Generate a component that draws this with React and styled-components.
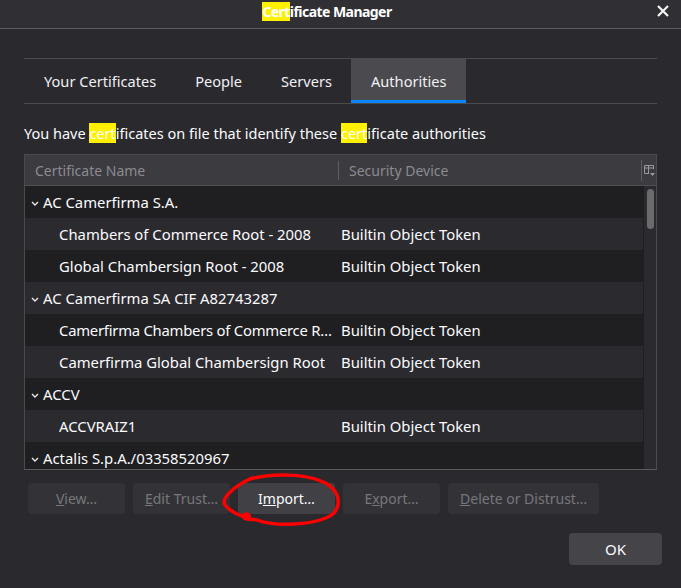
import React from "react";
import styled, { createGlobalStyle } from "styled-components";

const GlobalStyle = createGlobalStyle`
  html, body {
    margin: 0;
    padding: 0;
    background: #2a2a2e;
  }
  body {
    font-family: "Noto Sans", "Open Sans", sans-serif;
    color: #fbfbfe;
  }
`;

const rows = [
  { name: "AC Camerfirma S.A.", group: true },
  { name: "Chambers of Commerce Root - 2008", device: "Builtin Object Token" },
  { name: "Global Chambersign Root - 2008", device: "Builtin Object Token" },
  { name: "AC Camerfirma SA CIF A82743287", group: true },
  { name: "Camerfirma Chambers of Commerce R…", device: "Builtin Object Token", tight: true },
  { name: "Camerfirma Global Chambersign Root", device: "Builtin Object Token" },
  { name: "ACCV", group: true },
  { name: "ACCVRAIZ1", device: "Builtin Object Token" },
  { name: "Actalis S.p.A./03358520967", group: true },
];

const tabs = ["Your Certificates", "People", "Servers", "Authorities"];

export default function App() {
  return (
    <>
      <GlobalStyle />
      <Window>
        <TitleBar>
          <Title>
            <Mark>Cert</Mark>ificate Manager
          </Title>
          <Close aria-label="Close">
            <svg width="12" height="12" viewBox="0 0 12 12">
              <path d="M1 1 L11 11 M11 1 L1 11" stroke="#f4f4f4" strokeWidth="2.2" />
            </svg>
          </Close>
        </TitleBar>

        <Body>
          <Tabs>
            {tabs.map((t) => (
              <Tab key={t} $active={t === "Authorities"}>
                {t}
              </Tab>
            ))}
          </Tabs>

          <Description>
            You have <Mark>cert</Mark>ificates on file that identify these{" "}
            <Mark>cert</Mark>ificate authorities
          </Description>

          <Tree>
            <Header>
              <HeadCell $first>Certificate Name</HeadCell>
              <HeadCell>Security Device</HeadCell>
              <Picker>
                <svg width="11" height="12" viewBox="0 0 11 12">
                  <path
                    d="M0.5 0.5 H9.5 V4 M0.5 0.5 V8.5 H5 M0.5 3 H9.5 M4.5 0.5 V8.5"
                    stroke="#9a9a9e"
                    strokeWidth="1"
                    fill="none"
                  />
                  <path d="M6 8 H11 L8.5 11 Z" fill="#9a9a9e" />
                </svg>
              </Picker>
            </Header>
            <TreeBody>
              <Rows>
                {rows.map((r, i) => (
                  <Row key={r.name} $odd={i % 2 === 1}>
                    <NameCell $group={r.group}>
                      {r.group && (
                        <Twisty width="8" height="5" viewBox="0 0 8 5">
                          <path d="M1 1 L4 4 L7 1" stroke="#e8e8ea" strokeWidth="1.4" fill="none" />
                        </Twisty>
                      )}
                      <NameText $tight={r.tight}>{r.name}</NameText>
                    </NameCell>
                    <DeviceCell>{r.device}</DeviceCell>
                  </Row>
                ))}
              </Rows>
              <Scrollbar>
                <Thumb />
              </Scrollbar>
            </TreeBody>
          </Tree>

          <Buttons>
            <Button disabled $w={97}>
              <u>V</u>iew…
            </Button>
            <Button disabled $w={97}>
              <u>E</u>dit Trust…
            </Button>
            <Button $w={97}>
              I<u>m</u>port…
            </Button>
            <Button disabled $w={97}>
              E<u>x</u>port…
            </Button>
            <Button disabled $w={151}>
              <u>D</u>elete or Distrust…
            </Button>
          </Buttons>

          <Footer>
            <OkButton>OK</OkButton>
          </Footer>
        </Body>

        <Scribble width="681" height="588" viewBox="0 0 681 588">
          <path
            d="M250 479 C 276 472, 314 474, 330 486 C 342 496, 341 512, 326 518 C 306 526, 272 526, 257 520 C 250 518, 243 521, 244 516 C 245 512, 251 515, 249 518 C 240 516, 230 511, 225 505 C 221 499, 232 487, 252 478"
            stroke="#ff0000"
            strokeWidth="3.5"
            fill="none"
            strokeLinecap="round"
            strokeLinejoin="round"
          />
        </Scribble>
      </Window>
    </>
  );
}

const Window = styled.div`
  position: relative;
  width: 681px;
  height: 588px;
  display: flex;
  flex-direction: column;
  background: #2a2a2e;
  overflow: hidden;
`;

const TitleBar = styled.div`
  height: 28px;
  flex: none;
  display: flex;
  align-items: center;
  justify-content: center;
  background: #303034;
  border-bottom: 1px solid #5c5c60;
  position: relative;
`;

const Title = styled.div`
  font-size: 14px;
  font-weight: 700;
  color: #ffffff;
  letter-spacing: -0.55px;
  margin-left: -27px;
  margin-top: -6px;
`;

const Close = styled.div`
  position: absolute;
  right: 12px;
  top: 5px;
  width: 12px;
  height: 12px;
  display: flex;
`;

const Mark = styled.span`
  background: #fff000;
  color: #ffffff;
`;

const Body = styled.div`
  flex: 1;
  display: flex;
  flex-direction: column;
  padding: 29px 24px 0 24px;
`;

const Tabs = styled.div`
  display: flex;
  height: 44px;
  border-top: 1px solid #4a4a4f;
  border-bottom: 1px solid #4a4a4f;
`;

const Tab = styled.div`
  display: flex;
  align-items: center;
  padding: 0 19px 0 20px;
  font-size: 14.6px;
  color: #f0f0f4;
  background: ${(p) => (p.$active ? "#4a4a4f" : "transparent")};
  box-shadow: ${(p) => (p.$active ? "inset 0 -3px 0 #0a84ff" : "none")};
`;

const Description = styled.div`
  margin-top: 19px;
  font-size: 14.5px;
  line-height: 20px;
  color: #fbfbfe;
`;

const Tree = styled.div`
  margin-top: 11px;
  height: 316px;
  border: 1px solid #4a4a4f;
  border-bottom-color: #5a5a5e;
  display: flex;
  flex-direction: column;
  box-sizing: border-box;
`;

const Header = styled.div`
  height: 30px;
  flex: none;
  display: flex;
  align-items: center;
  background: #3b3b40;
  border-bottom: 1px solid #4f4f54;
`;

const HeadCell = styled.div`
  display: flex;
  align-items: center;
  height: 19px;
  padding-left: 10px;
  font-size: 14px;
  color: #8b8b90;
  border-left: ${(p) => (p.$first ? "none" : "1px solid #5e5e63")};
  width: ${(p) => (p.$first ? "303px" : "292px")};
  flex: none;
`;

const Picker = styled.div`
  flex: 1;
  height: 19px;
  border-left: 1px solid #5e5e63;
  display: flex;
  align-items: center;
  justify-content: center;
  padding-top: 2px;
`;

const TreeBody = styled.div`
  flex: 1;
  display: flex;
  overflow: hidden;
`;

const Rows = styled.div`
  flex: 1;
  display: flex;
  flex-direction: column;
  overflow: hidden;
`;

const Row = styled.div`
  height: 32px;
  flex: none;
  display: flex;
  align-items: center;
  background: ${(p) => (p.$odd ? "#2b2a2f" : "#1f1f22")};
  font-size: 14.85px;
  color: #fbfbfe;
`;

const NameCell = styled.div`
  width: 313px;
  flex: none;
  display: flex;
  align-items: center;
  box-sizing: border-box;
  padding-left: ${(p) => (p.$group ? "6px" : "34px")};
  padding-right: 0;
`;

const NameText = styled.span`
  overflow: hidden;
  white-space: nowrap;
  letter-spacing: ${(p) => (p.$tight ? "-0.25px" : "normal")};
`;

const Twisty = styled.svg`
  flex: none;
  margin-right: 4px;
  margin-top: 2px;
`;

const DeviceCell = styled.div`
  padding-left: 3px;
  white-space: nowrap;
`;

const Scrollbar = styled.div`
  width: 12px;
  flex: none;
  background: #2b2a2f;
  border-left: 1px solid #1f1f22;
  display: flex;
  justify-content: center;
  padding-top: 3px;
`;

const Thumb = styled.div`
  width: 7px;
  height: 40px;
  border-radius: 4px;
  background: #6b6b6e;
`;

const Buttons = styled.div`
  display: flex;
  gap: 8px;
  margin-top: 13px;
  padding-left: 4px;
`;

const Button = styled.button`
  width: ${(p) => p.$w}px;
  height: 31px;
  border: none;
  border-radius: 4px;
  font-family: inherit;
  font-size: 14px;
  background: ${(p) => (p.disabled ? "#333337" : "#404045")};
  color: ${(p) => (p.disabled ? "#77777b" : "#fbfbfe")};
  padding: 0;
`;

const Footer = styled.div`
  display: flex;
  justify-content: flex-end;
  margin-top: 19px;
  margin-right: -5px;
`;

const OkButton = styled.button`
  width: 93px;
  height: 32px;
  border: none;
  border-radius: 4px;
  background: #444449;
  color: #fbfbfe;
  font-family: inherit;
  font-size: 15px;
`;

const Scribble = styled.svg`
  position: absolute;
  left: 0;
  top: 0;
  pointer-events: none;
`;
